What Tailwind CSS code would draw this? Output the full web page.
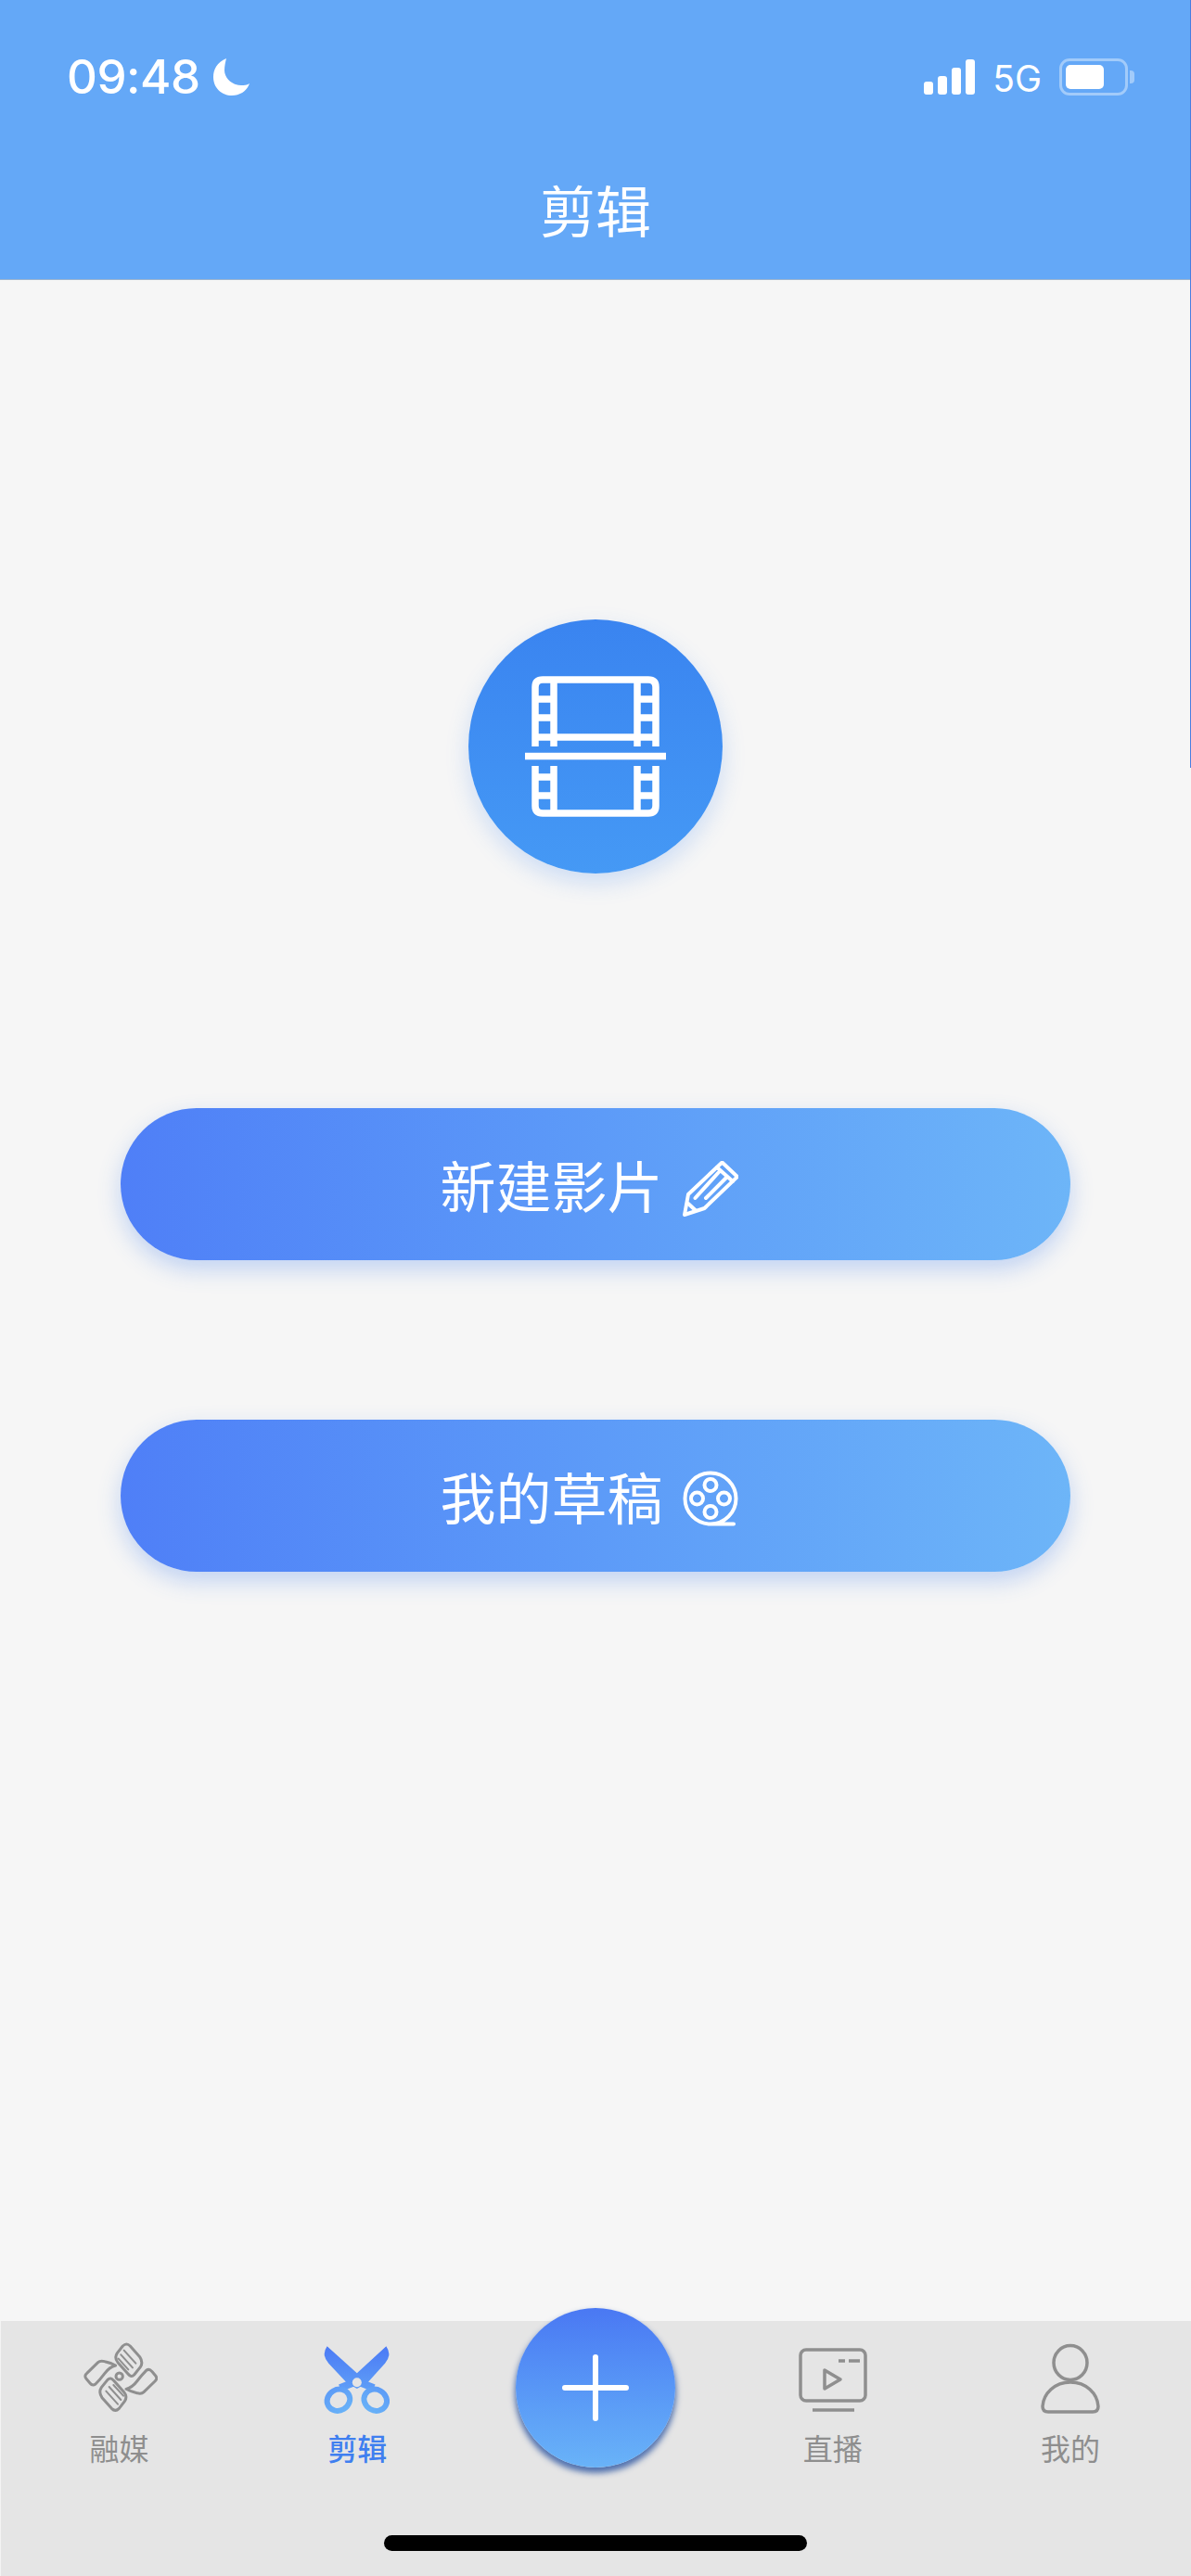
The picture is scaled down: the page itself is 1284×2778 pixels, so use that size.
<!doctype html>
<html lang="zh">
<head>
<meta charset="utf-8">
<title>剪辑</title>
<script src="https://cdn.jsdelivr.net/npm/@tailwindcss/browser@4"></script>
</head>
<body class="m-0 bg-[#f6f6f6]">
<div class="relative w-[1284px] h-[2778px] overflow-hidden flex flex-col bg-[#f6f6f6] font-['Noto_Sans_CJK_SC','Noto_Sans',sans-serif]">

  <!-- Header -->
  <header class="relative h-[302px] shrink-0 bg-[#64a8f7] border-b border-[#9db4cf] text-white">
    <div class="flex items-start justify-between pt-[63px] pl-[72px] pr-[68px]">
      <div class="flex items-center gap-[14px] h-[40px]">
        <span class="font-['Inter',sans-serif] font-medium text-[51px] leading-[40px] tracking-[-0.5px]">09:48</span>
        <svg class="w-[40px] h-[40px]" viewBox="0 0 40 40"><path fill="#fff" d="M14 0C4 4 0 12 0 20c0 12 9 20 20 20 9 0 16-5 19-13-3 2-6 2-9 2-10 0-18-8-18-16 0-5 1-9 2-13z"/></svg>
      </div>
      <div class="flex items-center h-[40px]">
        <div class="flex items-end gap-[5px] h-[38px] mr-[19px]">
          <div class="w-[10px] h-[14px] rounded-[3px] bg-white"></div>
          <div class="w-[10px] h-[20px] rounded-[3px] bg-white"></div>
          <div class="w-[10px] h-[29px] rounded-[3px] bg-white"></div>
          <div class="w-[10px] h-[38px] rounded-[3px] bg-white"></div>
        </div>
        <span class="font-['Inter',sans-serif] text-[39px] leading-[44px] mr-[19px] mt-[3px]">5G</span>
        <div class="relative w-[74px] h-[40px] rounded-[11px] border-[3px] border-white/40 p-[4px]">
          <div class="w-[41px] h-[26px] rounded-[5px] bg-white"></div>
          <div class="absolute right-[-10px] top-[10px] w-[5px] h-[14px] rounded-r-[4px] bg-white/40"></div>
        </div>
      </div>
    </div>
    <h1 class="absolute left-0 right-0 top-[185px] text-center text-[60px] leading-[80px] font-normal">剪辑</h1>
  </header>

  <!-- Main -->
  <main class="flex-1 flex flex-col items-center pt-[366px]">
    <div class="w-[274px] h-[274px] rounded-full flex items-center justify-center bg-gradient-to-b from-[#3a84f0] to-[#4599f5] shadow-[0_10px_24px_rgba(60,130,240,0.22)]">
      <svg class="w-[152px] h-[152px]" viewBox="0 0 152 152" fill="none" stroke="#fff" stroke-width="7.500">
        <path d="M11 76V12q0-8 8-8H133q8 0 8 8v64M31 4v72M121 4v72M11 25H31M11 45H31M121 25h20M121 45h20M11 66H141"/>
        <path d="M0 86.500h152"/>
        <path d="M11 97v43q0 8 8 8H133q8 0 8-8V97M31 97v51M121 97v51M11 109H31M11 129H31M121 109h20M121 129h20"/>
      </svg>
    </div>

    <button class="mt-[253px] w-[1024px] h-[164px] rounded-[82px] flex items-center justify-center gap-[21px] pr-[14px] text-white text-[60px] leading-[80px] bg-gradient-to-r from-[#4f7ff7] to-[#6db5f8] shadow-[0_10px_24px_rgba(70,130,235,0.3)]">
      <span>新建影片</span>
      <svg class="w-[60px] h-[60px] mt-[10px]" viewBox="0 0 60 60" fill="none" stroke="#fff" stroke-width="4" stroke-linejoin="round" stroke-linecap="round">
        <path d="M2 58 6 36 42.500 1.500 59 17 23.500 51z"/>
        <path d="M37 7l17 15M13.500 40 38.500 12.500M25 40l22-22M6 46l7.500 7"/>
      </svg>
    </button>

    <button class="mt-[172px] w-[1024px] h-[164px] rounded-[82px] flex items-center justify-center gap-[21px] pr-[14px] text-white text-[60px] leading-[80px] bg-gradient-to-r from-[#4f7ff7] to-[#6db5f8] shadow-[0_10px_24px_rgba(70,130,235,0.3)]">
      <span>我的草稿</span>
      <svg class="w-[60px] h-[60px] mt-[6px]" viewBox="0 0 60 60" fill="none" stroke="#fff" stroke-width="4" stroke-linecap="round">
        <path d="M30 57.500A27.500 27.500 0 1 1 30 2.500 27.500 27.500 0 0 1 30 57.500H55"/>
        <circle cx="30" cy="15.500" r="6.500"/><circle cx="30" cy="44.500" r="6.500"/><circle cx="15.500" cy="30" r="6.500"/><circle cx="44.500" cy="30" r="6.500"/>
      </svg>
    </button>
  </main>

  <!-- Tab bar -->
  <nav class="relative h-[275px] shrink-0 bg-[#e5e5e5] pt-[23px]">
    <div class="grid grid-cols-5">
      <a class="flex flex-col items-center text-[#8e8e8e]">
        <svg class="w-[84px] h-[80px]" viewBox="50 50 250 240" fill="none" stroke="#8f8f8f" stroke-width="9" stroke-linejoin="round" stroke-linecap="round">
          <path d="M188 62Q200 50 212 62L243 97Q255 115 245 130L225 155Q215 165 205 152Q190 135 172 115Q160 100 170 85Z"/>
          <path stroke-width="6" d="M192 76 230 118M182 90 220 132M174 103 206 138"/>
          <path d="M72 150 108 115Q115 108 130 112 150 116 165 125 145 130 130 150 115 170 100 185 90 192 82 182L70 168Q62 158 72 150Z"/>
          <g transform="rotate(180 182 163)">
            <path d="M188 62Q200 50 212 62L243 97Q255 115 245 130L225 155Q215 165 205 152Q190 135 172 115Q160 100 170 85Z"/>
            <path stroke-width="6" d="M192 76 230 118M182 90 220 132M174 103 206 138"/>
            <path d="M72 150 108 115Q115 108 130 112 150 116 165 125 145 130 130 150 115 170 100 185 90 192 82 182L70 168Q62 158 72 150Z"/>
          </g>
          <circle cx="177" cy="160" r="11"/>
        </svg>
        <span class="mt-[13px] text-[32px] leading-[40px]">融媒</span>
      </a>
      <a class="flex flex-col items-center text-[#3f7ff0]">
        <svg class="w-[78px] h-[80px]" viewBox="50 50 235 240">
          <defs><linearGradient id="sc" gradientUnits="userSpaceOnUse" x1="0" y1="60" x2="0" y2="285"><stop offset="0" stop-color="#4b79f5"/><stop offset="1" stop-color="#69b3f8"/></linearGradient></defs>
          <path fill="url(#sc)" d="M70 62Q50 90 75 118L135 182 167 200 200 182 258 118Q282 90 262 62L167 150Z"/>
          <g fill="none" stroke="url(#sc)" stroke-width="18">
            <path stroke-width="24" d="M167 176 112 198M167 176 222 198"/>
            <ellipse cx="107" cy="237" rx="38" ry="34" transform="rotate(-30 107 237)"/>
            <ellipse cx="227" cy="237" rx="38" ry="34" transform="rotate(30 227 237)"/>
          </g>
          <circle cx="167" cy="180" r="15" fill="#e5e5e5"/>
        </svg>
        <span class="mt-[13px] text-[32px] leading-[40px] font-medium">剪辑</span>
      </a>
      <div></div>
      <a class="flex flex-col items-center text-[#8e8e8e] pr-[2px]">
        <svg class="w-[76px] h-[80px]" viewBox="0 0 76 80" fill="none" stroke="#8f8f8f" stroke-width="3.500" stroke-linejoin="round">
          <rect x="3" y="8" width="70" height="55" rx="6"/>
          <path d="M16 73h45M44 20h7M55 20h12"/>
          <path d="M29 30V50L46 40Z"/>
        </svg>
        <span class="mt-[13px] text-[32px] leading-[40px]">直播</span>
      </a>
      <a class="flex flex-col items-center text-[#8e8e8e] pr-[3px]">
        <svg class="w-[68px] h-[80px]" viewBox="0 0 68 80" fill="none" stroke="#8f8f8f" stroke-width="3.500">
          <ellipse cx="34" cy="22" rx="18" ry="18.500"/>
          <path d="M34 43C17 43 5 55 4 69q0 6 6 6H58q6 0 6-6C63 55 51 43 34 43Z"/>
        </svg>
        <span class="mt-[13px] text-[32px] leading-[40px]">我的</span>
      </a>
    </div>
    <div class="absolute left-[414px] top-[231px] w-[456px] h-[17px] rounded-full bg-black"></div>
    <div class="absolute left-0 top-0 bottom-0 w-px bg-[#f4f4f4]"></div>
  </nav>

  <!-- Centre action button -->
  <button class="absolute left-[556px] top-[2489px] w-[172px] h-[172px] rounded-full flex items-center justify-center bg-gradient-to-b from-[#4a78f3] to-[#69b3f8] shadow-[0_5px_6px_1px_rgba(45,85,160,0.8)]">
    <svg class="w-[72px] h-[72px]" viewBox="0 0 72 72" stroke="#fff" stroke-width="6" stroke-linecap="round"><path d="M36 3v66M3 36h66"/></svg>
  </button>

  <!-- Thin edge line along the right of the screen -->
  <div class="absolute right-0 top-0 h-[828px] w-px bg-[#4a7de0]"></div>
</div>
</body>
</html>
